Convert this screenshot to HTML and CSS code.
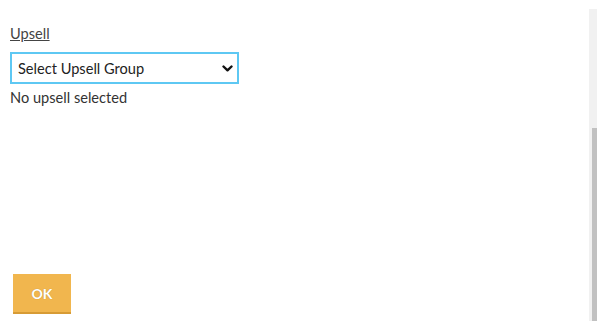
FILE: index.html
```html
<!DOCTYPE html>
<html lang="en">
  <head>
    <meta charset="utf-8" />
    <meta name="viewport" content="width=device-width, initial-scale=1.0" />
    <title>Upsell</title>
    <link rel="stylesheet" href="styles.css">
  </head>
  <body>
    <div id="dialog">
      <section id="panel">
        <div id="upsell-section">
          <label for="upsell" class="field-label">Upsell</label>
          <div class="select-wrap">
            <select id="upsell" name="upsell">
              <option>Select Upsell Group</option>
            </select>
            <svg class="chevron" width="11" height="7" viewBox="0 0 11 7">
              <path d="M1.5 1.5 L5.5 5.3 L9.5 1.5" fill="none" stroke="#111" stroke-width="2.4" stroke-linecap="round" stroke-linejoin="round" />
            </svg>
          </div>
          <p id="upsell-status">No upsell selected</p>
        </div>

        <div id="actions">
          <button type="button" id="ok">OK</button>
        </div>
      </section>

      <div class="scroll-track">
        <div class="scroll-thumb"></div>
      </div>
    </div>
  </body>
</html>
```

FILE: styles.css
```css
body {
  margin: 0;
  background: #fff;
  font-family: Lato, "Open Sans", sans-serif;
  font-size: 14.6px;
  color: #333;
}

#dialog {
  display: flex;
  flex-direction: row;
  height: 328px;
}

#panel {
  flex: 1;
  display: flex;
  flex-direction: column;
  justify-content: space-between;
  padding: 25px 0 14px 10px;
}

.field-label {
  display: inline-block;
  text-decoration: underline;
  color: #444;
  line-height: 16px;
}

.select-wrap {
  position: relative;
  width: 229px;
  margin-top: 10px;
}

#upsell {
  appearance: none;
  -webkit-appearance: none;
  width: 100%;
  height: 32px;
  border: 2px solid #5ec8f3;
  border-radius: 0;
  background: #fff;
  padding: 0 0 0 6px;
  font-family: inherit;
  font-size: 14.6px;
  color: #222;
  outline: none;
}

.chevron {
  position: absolute;
  right: 6px;
  top: 13px;
}

#upsell-status {
  margin: 6px 0 0;
  color: #333;
  line-height: 16px;
}

#actions {
  padding-left: 3px;
}

#ok {
  width: 58px;
  height: 40px;
  border: none;
  border-bottom: 2px solid #d79b35;
  background: #f1b64e;
  color: #fff;
  font-family: inherit;
  font-weight: bold;
  font-size: 14px;
  text-shadow: 0 0 1px rgba(0, 0, 0, 0.25);
}

.scroll-track {
  width: 8px;
  margin: 9px 3px 7px 0;
  background: #f1f1f1;
  display: flex;
  flex-direction: column;
}

.scroll-thumb {
  margin: 119px 0 0 3px;
  flex: 1;
  background: #c1c1c1;
}
```
